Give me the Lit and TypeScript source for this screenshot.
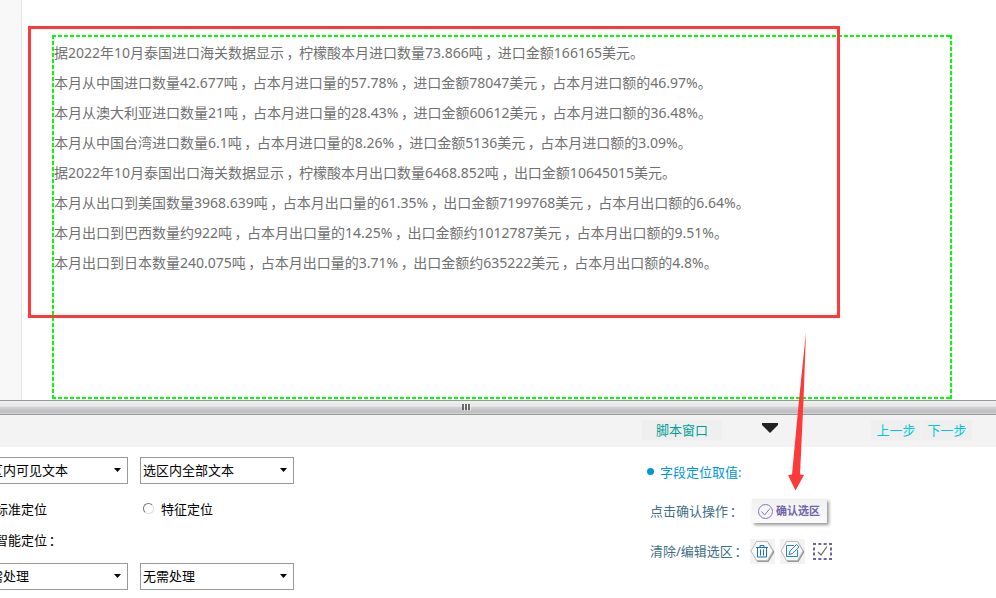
import { LitElement, html, css } from "lit";
import { customElement } from "lit/decorators.js";

const REPORT = [
  "据2022年10月泰国进口海关数据显示，柠檬酸本月进口数量73.866吨，进口金额166165美元。",
  "本月从中国进口数量42.677吨，占本月进口量的57.78%，进口金额78047美元，占本月进口额的46.97%。",
  "本月从澳大利亚进口数量21吨，占本月进口量的28.43%，进口金额60612美元，占本月进口额的36.48%。",
  "本月从中国台湾进口数量6.1吨，占本月进口量的8.26%，进口金额5136美元，占本月进口额的3.09%。",
  "据2022年10月泰国出口海关数据显示，柠檬酸本月出口数量6468.852吨，出口金额10645015美元。",
  "本月从出口到美国数量3968.639吨，占本月出口量的61.35%，出口金额7199768美元，占本月出口额的6.64%。",
  "本月出口到巴西数量约922吨，占本月出口量的14.25%，出口金额约1012787美元，占本月出口额的9.51%。",
  "本月出口到日本数量240.075吨，占本月出口量的3.71%，出口金额约635222美元，占本月出口额的4.8%。",
];

// Full-width commas and colons sit in the middle of their cell.
const centred = (line: string) =>
  line.split(/([，：])/).map((part) => (part === "，" || part === "：" ? html`<span class="mid">${part}</span>` : part));

@customElement("app-root")
export class AppRoot extends LitElement {
  static styles = css`
    :host {
      display: block;
      position: relative;
      overflow: hidden;
      background: #fff;
      color: #000;
      font: 13px/20px "Noto Sans", "Noto Sans CJK SC", sans-serif;
    }
    * {
      box-sizing: border-box;
    }
    .mid {
      display: inline-block;
      width: 13px;
      padding-right: 3px;
      font-family: "Noto Sans CJK SC", sans-serif;
      font-feature-settings: "halt";
      line-height: 1;
      text-align: center;
    }
    .region .mid {
      width: 15px;
    }
    button,
    select {
      font: inherit;
      margin: 0;
    }
    .preview {
      display: grid;
      grid-template-columns: 22px 1fr;
    }
    .rail {
      background: #f8f8f8;
      border-right: 1px solid #e6e6e6;
    }
    .page {
      padding: 35px 44px 1px 30px;
    }
    .region {
      min-height: 364px;
      padding: 3px 2px;
      color: #717171;
      font-size: 14px;
      line-height: 30px;
      white-space: nowrap;
      background:
        repeating-linear-gradient(90deg, #0f0 0 4px, transparent 4px 6px) top / 100% 2px no-repeat,
        repeating-linear-gradient(90deg, #0f0 0 4px, transparent 4px 6px) bottom / 100% 2px no-repeat,
        repeating-linear-gradient(#0f0 0 4px, transparent 4px 6px) left / 2px 100% no-repeat,
        repeating-linear-gradient(#0f0 0 4px, transparent 4px 6px) right / 2px 100% no-repeat;
    }
    .region p {
      height: 30px;
      margin: 0;
    }
    .marker {
      position: absolute;
      left: 28px;
      top: 26px;
      width: 812px;
      height: 292px;
      border: 3px solid #fc3a3a;
      pointer-events: none;
    }
    .arrow {
      position: absolute;
      left: 786px;
      top: 330px;
      pointer-events: none;
    }
    .splitter {
      display: grid;
      place-items: center;
      height: 15px;
      padding-right: 64px;
      border: solid #999;
      border-width: 1px 0;
      background: linear-gradient(#f0f0f0, #e4e4e4 45%, #d0d0d2 50%, #bcbcc0 85%, #d8d8d8);
    }
    .toolbar {
      display: flex;
      align-items: center;
      height: 32px;
      padding: 0 24px 2px 0;
      background: #f3f3f3;
    }
    .toolbar button {
      height: 20px;
      padding: 0;
      border: 0;
      background: #efefef;
      color: #00c8dc;
      line-height: 20px;
    }
    .toolbar .script {
      width: 80px;
      color: #009e96;
      margin-left: auto;
    }
    .toolbar .fold {
      width: 18px;
      margin: 0 91px 0 39px;
      background: none;
    }
    .fold svg {
      display: block;
      margin: 0 auto 4px;
    }
    .toolbar .step {
      width: 50px;
      margin-left: 1px;
    }
    .panel {
      display: flex;
      justify-content: space-between;
      padding: 10px 161px 8px 0;
    }
    .fields {
      display: grid;
      grid-template-columns: 154px 154px;
      grid-template-rows: 27px 50px 12px 44px;
      column-gap: 12px;
      align-items: center;
      margin-left: -26px;
    }
    .pick {
      position: relative;
      display: block;
      height: 27px;
    }
    .pick select {
      display: block;
      width: 100%;
      height: 27px;
      padding: 0 2px 2px;
      border: 1px solid #999;
      border-radius: 0;
      background: #fff;
      color: #000;
      appearance: none;
    }
    .pick svg {
      position: absolute;
      right: 7px;
      top: 11px;
      pointer-events: none;
    }
    .low {
      align-self: end;
    }
    .choice {
      display: flex;
      align-items: center;
      gap: 7px;
      padding-left: 3px;
    }
    .choice input {
      appearance: none;
      width: 11px;
      height: 11px;
      margin: 0 0 2px;
      border: 1px solid;
      border-color: #777 #ddd #ddd #777;
      border-radius: 50%;
      background: #fff;
    }
    .note {
      padding-left: 21px;
    }
    .actions {
      color: #3f6f86;
      padding-top: 5px;
    }
    .actions h2 {
      display: flex;
      align-items: center;
      gap: 6px;
      margin: 0 0 9px -3px;
      font-size: 13px;
      font-weight: 400;
      color: #0096dc;
    }
    .dot {
      width: 7px;
      height: 7px;
      margin-bottom: 2px;
      border-radius: 50%;
      background: #0096dc;
    }
    .line {
      display: grid;
      grid-template-columns: 100px auto;
      align-items: center;
      height: 40px;
    }
    .confirm {
      display: flex;
      align-items: center;
      gap: 2px;
      width: 75px;
      height: 24px;
      margin-left: 2px;
      padding: 0 0 0 5px;
      border: 0;
      background: linear-gradient(#f0f0f0, #fafafa);
      box-shadow: 2px 2px 3px #999;
      color: #7163a8;
    }
    .confirm span {
      font-size: 11px;
      font-weight: 700;
      white-space: nowrap;
    }
    .tools {
      display: flex;
      gap: 5px;
    }
    .tools button {
      width: 25px;
      height: 25px;
      padding: 0;
      border: 0;
      background: #f3f3f3;
    }
    .tools button:last-child {
      background: none;
    }
    .tools svg {
      display: block;
    }
  `;

  private pick(name: string, value: string, extra = "") {
    return html`<div class="pick ${extra}">
      <select aria-label=${name}>
        <option>${value}</option>
      </select>
      <svg width="7" height="4" viewBox="0 0 7 4"><path d="M0 0h7L3.500 4z" fill="#000" /></svg>
    </div>`;
  }

  render() {
    return html`
      <section class="preview">
        <div class="rail"></div>
        <div class="page">
          <div class="region">${REPORT.map((line) => html`<p>${centred(line)}</p>`)}</div>
        </div>
      </section>
      <div class="splitter">
        <svg width="9" height="7" viewBox="0 0 9 7">
          <path d="M1 0v6M4 0v6M7 0v6" stroke="#444" stroke-width="1.500" />
          <path d="M2.500 1v6M5.500 1v6M8.500 1v6" stroke="#fff" stroke-opacity=".6" />
        </svg>
      </div>
      <nav class="toolbar">
        <button class="script">脚本窗口</button>
        <button class="fold" aria-label="收起">
          <svg width="18" height="11" viewBox="0 0 18 11"><path d="M1 0h16v2L9 10 1 2z" fill="#222" /></svg>
        </button>
        <button class="step">上一步</button>
        <button class="step">下一步</button>
      </nav>
      <section class="panel">
        <form class="fields">
          ${this.pick("可见文本", "选区内可见文本")} ${this.pick("全部文本", "选区内全部文本")}
          <label class="choice"><input type="radio" name="locate" />标准定位</label>
          <label class="choice"><input type="radio" name="locate" />特征定位</label>
          <span class="note">${centred("智能定位：")}</span><span></span>
          ${this.pick("处理一", "无需处理", "low")} ${this.pick("处理二", "无需处理", "low")}
        </form>
        <div class="actions">
          <h2><span class="dot"></span>字段定位取值:</h2>
          <div class="line">
            <span>${centred("点击确认操作：")}</span>
            <button class="confirm">
              <svg width="17" height="17" viewBox="0 0 17 17" fill="none" stroke="#8478b4">
                <circle cx="8.500" cy="8.500" r="7" />
                <path d="M4.500 8.500l3 3.500 5.500-6.500" />
              </svg>
              <span>确认选区</span>
            </button>
          </div>
          <div class="line">
            <span>${centred("清除/编辑选区：")}</span>
            <div class="tools">
              <button aria-label="清除选区">
                <svg width="25" height="25" viewBox="0 0 25 25" fill="none">
                  <path d="M7.500 3.500h11l6 9.500-6 10h-11l-5-9z" fill="#999" />
                  <path d="M6.500 2.500h11l5.500 9.500-5.500 9.500h-11L1 12z" fill="#f9f9f9" stroke="#b8b8b8" />
                  <path d="M6 8.500h12M10 8V6.500h4V8M7.500 8.500V18h9V8.500M10.500 10.500v6M13.500 10.500v6" stroke="#1470b8" />
                </svg>
              </button>
              <button aria-label="编辑选区">
                <svg width="25" height="25" viewBox="0 0 25 25" fill="none">
                  <path d="M7.500 3.500h11l6 9.500-6 10h-11l-5-9z" fill="#999" />
                  <path d="M6.500 2.500h11l5.500 9.500-5.500 9.500h-11L1 12z" fill="#f9f9f9" stroke="#b8b8b8" />
                  <path d="M14 6.500H6.500v11h11V11M9 15.500l1-3.500 6.500-6.500 2.500 2.500-6.500 6.500z" stroke="#2a82c6" />
                </svg>
              </button>
              <button aria-label="选取选区">
                <svg width="25" height="25" viewBox="0 0 25 25" fill="none" stroke="#6f5fa8" stroke-width="2">
                  <path d="M3 5h19M3 20h19" stroke-dasharray="3 2.330" />
                  <path d="M4 8.500v8M21 8.500v8" stroke-dasharray="3 2" />
                  <path d="M8 13l3 3 6-8.500" stroke="#666" stroke-width="1.200" />
                </svg>
              </button>
            </div>
          </div>
        </div>
      </section>
      <div class="marker"></div>
      <svg class="arrow" width="30" height="162" viewBox="0 0 30 162">
        <path d="M20 2L17.500 70 14 144.500l4 .5-8.500 15.500L2 145l4-.5L13 70z" fill="#fc3a3a" />
      </svg>
    `;
  }
}
